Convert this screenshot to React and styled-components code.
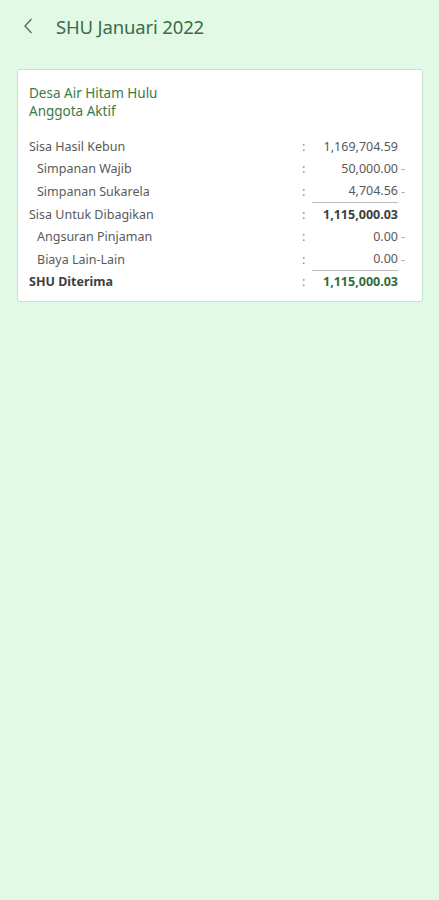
import React from "react";
import styled, { createGlobalStyle } from "styled-components";

const Global = createGlobalStyle`
  html, body { margin: 0; padding: 0; background: #e2fae5; }
  body { font-family: "Noto Sans", "Open Sans", sans-serif; }
  #root { min-height: 900px; background: #e2fae5; }
`;

const Page = styled.div`
  min-height: 900px;
  background: #e2fae5;
  display: flex;
  flex-direction: column;
`;

const Header = styled.header`
  height: 52px;
  display: flex;
  align-items: center;
  padding-left: 20px;
  gap: 20px;
`;

const BackButton = styled.button`
  border: 0;
  background: none;
  padding: 0;
  width: 16px;
  height: 20px;
  display: flex;
  align-items: center;
  justify-content: center;
  color: #6f7470;
`;

const Title = styled.h1`
  margin: 0;
  font-size: 18.5px;
  font-weight: 400;
  color: #3b6d47;
  letter-spacing: -0.15px;
`;

const Card = styled.section`
  margin: 17px 16px 0 17px;
  background: #fff;
  border: 1px solid #c6e3cb;
  border-radius: 3px;
  padding: 14px 16px 8px 11px;
`;

const Org = styled.div`
  color: #3a7a46;
  font-size: 13.5px;
  line-height: 18px;
`;

const Table = styled.div`
  margin-top: 15px;
  display: grid;
  grid-template-columns: 1fr 10px 86px 8px;
  font-size: 12.5px;
  color: #555;
`;

const Cell = styled.div`
  height: 22.6px;
  display: flex;
  align-items: center;
  white-space: nowrap;
  font-weight: ${(p) => (p.$bold ? 700 : 400)};
  color: ${(p) => (p.$green ? "#2f6d3a" : p.$bold ? "#3e3e3e" : "#5a5a5a")};
`;

const Label = styled(Cell)`
  padding-left: ${(p) => (p.$indent ? "8px" : "0")};
`;

const Colon = styled(Cell)`
  color: #8a8a8a;
`;

const Value = styled(Cell)`
  justify-content: flex-end;
  border-bottom: ${(p) => (p.$line ? "1px solid #bdbdbd" : "0")};
  box-sizing: border-box;
`;

const Suffix = styled(Cell)`
  color: #aaa;
  padding-left: 3px;
`;

const rows = [
  { label: "Sisa Hasil Kebun", value: "1,169,704.59" },
  { label: "Simpanan Wajib", value: "50,000.00", indent: true, minus: true },
  { label: "Simpanan Sukarela", value: "4,704.56", indent: true, minus: true, line: true },
  { label: "Sisa Untuk Dibagikan", value: "1,115,000.03", boldValue: true },
  { label: "Angsuran Pinjaman", value: "0.00", indent: true, minus: true },
  { label: "Biaya Lain-Lain", value: "0.00", indent: true, minus: true, line: true },
  { label: "SHU Diterima", value: "1,115,000.03", bold: true, green: true },
];

function Chevron() {
  return (
    <svg width="10" height="16" viewBox="0 0 10 16" fill="none">
      <path d="M8 1.5 L2 8 L8 14.5" stroke="currentColor" strokeWidth="1.7" strokeLinecap="round" strokeLinejoin="round" />
    </svg>
  );
}

export default function App() {
  return (
    <Page>
      <Global />
      <Header>
        <BackButton aria-label="Kembali">
          <Chevron />
        </BackButton>
        <Title>SHU Januari 2022</Title>
      </Header>
      <Card>
        <Org>Desa Air Hitam Hulu</Org>
        <Org>Anggota Aktif</Org>
        <Table>
          {rows.map((r) => (
            <React.Fragment key={r.label}>
              <Label $indent={r.indent} $bold={r.bold}>{r.label}</Label>
              <Colon>:</Colon>
              <Value $line={r.line} $bold={r.bold || r.boldValue} $green={r.green}>
                {r.value}
              </Value>
              <Suffix>{r.minus ? "-" : ""}</Suffix>
            </React.Fragment>
          ))}
        </Table>
      </Card>
    </Page>
  );
}
